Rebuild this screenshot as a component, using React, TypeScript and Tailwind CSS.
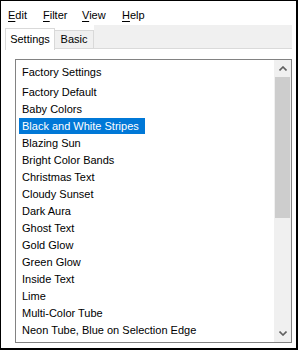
const ITEMS = [
  "Factory Default",
  "Baby Colors",
  "Black and White Stripes",
  "Blazing Sun",
  "Bright Color Bands",
  "Christmas Text",
  "Cloudy Sunset",
  "Dark Aura",
  "Ghost Text",
  "Gold Glow",
  "Green Glow",
  "Inside Text",
  "Lime",
  "Multi-Color Tube",
  "Neon Tube, Blue on Selection Edge",
];

const MENUS = [
  { key: "E", rest: "dit", w: "w-[35px]" },
  { key: "F", rest: "ilter", w: "w-[39px]" },
  { key: "V", rest: "iew", w: "w-[40px]" },
  { key: "H", rest: "elp", w: "w-[40px]" },
];

function Chevron({ up }: { up?: boolean }) {
  return (
    <svg width="8" height="5" viewBox="0 0 8 5" className="block">
      <path
        d={up ? "M0.5 4.5 L4 1 L7.5 4.5" : "M0.5 0.5 L4 4 L7.5 0.5"}
        fill="none"
        stroke="#606060"
        strokeWidth="1.6"
      />
    </svg>
  );
}

export default function App() {
  const selected = "Black and White Stripes";

  return (
    <div className="flex h-[350px] w-[298px] flex-col overflow-hidden border-t border-l border-r-2 border-b-2 border-black bg-white font-['Liberation_Sans',Arial,sans-serif] text-[11px] text-black">
      {/* menu bar */}
      <div className="flex h-[23px] items-center pl-[7px] pt-[6px]">
        {MENUS.map((m) => (
          <div key={m.key} className={`${m.w} leading-none`}>
            <span className="underline underline-offset-[2px]">{m.key}</span>
            {m.rest}
          </div>
        ))}
      </div>

      {/* tab strip */}
      <div className="flex h-[25px] items-end pl-[4px] pr-[4px]">
        <div className="z-10 -mb-px flex h-[22px] w-[50px] items-center justify-center border border-b-0 border-[#d9d9d9] bg-white pb-[1px]">
          Settings
        </div>
        <div className="flex h-[19px] w-[39px] items-center justify-center border border-l-0 border-[#d9d9d9] bg-[#f0f0f0]">
          Basic
        </div>
        <div className="h-[24px] flex-1 border-b border-[#dadada] bg-[#f0f0f0]" />
      </div>

      {/* tab page */}
      <div className="flex-1 pl-[14px] pt-[10px]">
        <div className="flex h-[284px] w-[277px] border border-[#828282] bg-white">
          <div className="flex-1 overflow-hidden">
            <div className="pl-[6px] pt-[4px] leading-[16px]">Factory Settings</div>
            <div className="mt-[4px]">
              {ITEMS.map((item) => (
                <div key={item} className="h-[17px] pl-[3px]">
                  <span
                    className={`inline-block h-[16px] whitespace-nowrap pl-[3px] pr-[6px] leading-[16px] ${
                      item === selected ? "bg-[#0078d7] text-white" : ""
                    }`}
                  >
                    {item}
                  </span>
                </div>
              ))}
            </div>
          </div>

          {/* scrollbar */}
          <div className="flex w-[17px] flex-col bg-[#f0f0f0]">
            <div className="flex h-[17px] items-center justify-center bg-[#f0f0f0]">
              <Chevron up />
            </div>
            <div className="mx-[1px] h-[141px] bg-[#cdcdcd]" />
            <div className="flex-1" />
            <div className="flex h-[17px] items-center justify-center">
              <Chevron />
            </div>
          </div>
        </div>
      </div>
    </div>
  );
}
